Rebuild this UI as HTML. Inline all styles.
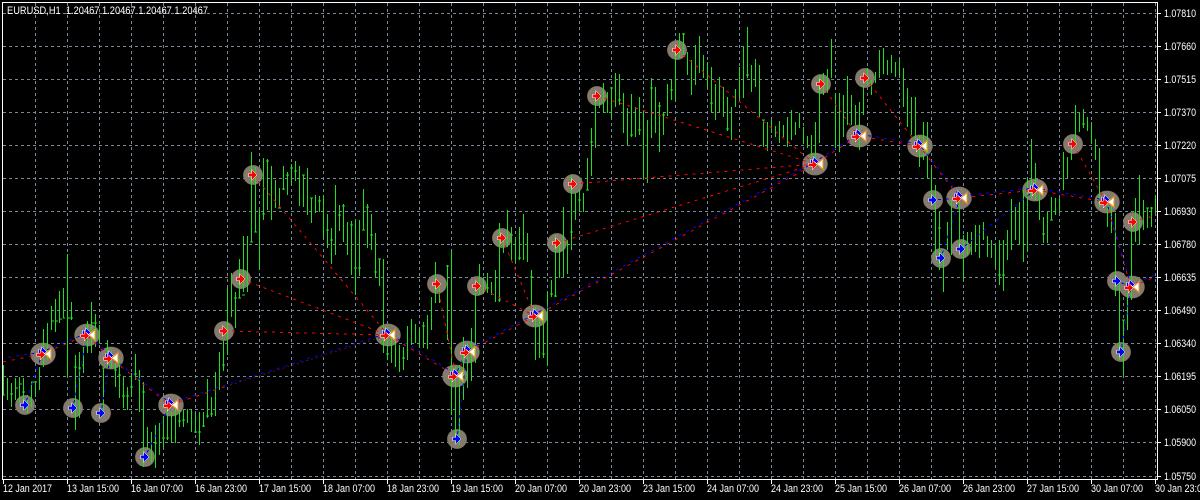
<!DOCTYPE html>
<html><head><meta charset="utf-8"><title>EURUSD,H1</title>
<style>
html,body{margin:0;padding:0;background:#000;width:1200px;height:500px;overflow:hidden}
svg{display:block}
text{font-family:"Liberation Sans",sans-serif;font-size:11px;fill:#fff}
</style></head><body>
<svg width="1200" height="500" viewBox="0 0 1200 500" xmlns="http://www.w3.org/2000/svg">
<defs>
<g id="r"><path d="M-4-1.5h3v-3l4.5 4.5-4.5 4.5v-3h-3z" fill="#f00" stroke="#fff" stroke-width="1.3" paint-order="stroke" shape-rendering="crispEdges"/></g>
<g id="b"><path d="M-4-1.5h3v-3l4.5 4.5-4.5 4.5v-3h-3z" fill="#00f" stroke="#fff" stroke-width="1.3" paint-order="stroke" shape-rendering="crispEdges"/></g>
<g id="d" shape-rendering="crispEdges">
<path d="M1 0l6-5.5v11z" fill="#fff" stroke="#e8952a" stroke-width="1.2"/>
<path d="M-5-4.5h3v-2l4 4-4 4v-2h-3z" fill="#00f" stroke="#fff" stroke-width="1.2" paint-order="stroke"/>
<path d="M-7-.5h3.5v-3l4.5 4-4.5 4.5v-3h-3.5z" fill="#f00" stroke="#fff" stroke-width="1.2" paint-order="stroke"/>
</g>
</defs>
<rect width="1200" height="500" fill="#000"/>

<!-- grid -->
<path fill="none" stroke="#778899" stroke-width="1" stroke-dasharray="3 3" shape-rendering="crispEdges" d="M3 13.5H1157M3 46.5H1157M3 79.5H1157M3 112.5H1157M3 145.5H1157M3 178.5H1157M3 211.5H1157M3 244.5H1157M3 277.5H1157M3 310.5H1157M3 343.5H1157M3 376.5H1157M3 409.5H1157M3 442.5H1157M3 476.5H1157
M35.5 3V479M67.5 3V479M99.5 3V479M131.5 3V479M163.5 3V479M195.5 3V479M227.5 3V479M259.5 3V479M291.5 3V479M323.5 3V479M355.5 3V479M387.5 3V479M419.5 3V479M451.5 3V479M483.5 3V479M515.5 3V479M547.5 3V479M579.5 3V479M611.5 3V479M643.5 3V479M675.5 3V479M707.5 3V479M739.5 3V479M771.5 3V479M803.5 3V479M835.5 3V479M867.5 3V479M899.5 3V479M931.5 3V479M963.5 3V479M995.5 3V479M1027.5 3V479M1059.5 3V479M1091.5 3V479M1123.5 3V479M1155.5 3V479"/>

<!-- marker halos -->
<g fill="#857b6c" stroke="#83796b" stroke-width="0.8">
<circle cx="253" cy="175" r="9.5"/><circle cx="241" cy="279" r="9.5"/><circle cx="224" cy="331" r="9.5"/><circle cx="437" cy="284" r="9.5"/><circle cx="477" cy="286" r="9.5"/><circle cx="502" cy="238" r="9.5"/><circle cx="557" cy="243" r="9.5"/><circle cx="573" cy="184" r="9.5"/><circle cx="597" cy="96" r="9.5"/><circle cx="677" cy="50" r="9.5"/><circle cx="821" cy="84" r="9.5"/><circle cx="865" cy="78" r="9.5"/><circle cx="1073" cy="144" r="9.5"/><circle cx="1133" cy="222" r="9.5"/>
<circle cx="25" cy="405" r="9.5"/><circle cx="73" cy="408" r="9.5"/><circle cx="101" cy="413" r="9.5"/><circle cx="145" cy="457" r="9.5"/><circle cx="457" cy="439" r="9.5"/><circle cx="933" cy="200" r="9.5"/><circle cx="941" cy="258" r="9.5"/><circle cx="961" cy="249" r="9.5"/><circle cx="1121" cy="352" r="9.5"/><circle cx="1117" cy="281" r="9.5"/>
<ellipse cx="43" cy="354" rx="12.3" ry="11"/><ellipse cx="87" cy="335" rx="12.3" ry="11"/><ellipse cx="111" cy="358" rx="12.3" ry="11"/><ellipse cx="171" cy="405" rx="12.3" ry="11"/><ellipse cx="388" cy="335" rx="12.3" ry="11"/><ellipse cx="455" cy="376" rx="12.3" ry="11"/><ellipse cx="467" cy="352" rx="12.3" ry="11"/><ellipse cx="535" cy="316" rx="12.3" ry="11"/><ellipse cx="815" cy="164" rx="12.3" ry="11"/><ellipse cx="859" cy="136" rx="12.3" ry="11"/><ellipse cx="920" cy="146" rx="12.3" ry="11"/><ellipse cx="959" cy="198" rx="12.3" ry="11"/><ellipse cx="1035" cy="190" rx="12.3" ry="11"/><ellipse cx="1107" cy="202" rx="12.3" ry="11"/><ellipse cx="1132" cy="287" rx="12.3" ry="11"/>
</g>

<!-- bars -->
<path fill="none" stroke="#1fe01f" stroke-width="1" shape-rendering="crispEdges" d="M3.5 365V395M3 395h2M7.5 378V400M11.5 383V407M10 394h3M15.5 378V400M15 388h3M19.5 377V403M19 384h3M23.5 378V402M22 392h3M27.5 395V413M31.5 382V407M31 382h3M35.5 382V397M34 382h3M39.5 367V390M43.5 329V367M47.5 323V360M51.5 306V330M51 321h3M55.5 299V332M55 321h3M59.5 291V323M59 319h3M63.5 288V318M63 318h2M67.5 254V377M67 318h3M71.5 302V320M70 318h3M75.5 355V430M74 367h3M79.5 352V418M78 368h3M83.5 347V373M82 365h2M87.5 321V353M91.5 302V353M91 323h3M95.5 314V347M94 323h3M99.5 325V343M103.5 368V413M102 368h3M107.5 340V367M111.5 350V368M115.5 360V387M114 370h3M119.5 359V398M118 375h3M123.5 377V408M122 396h3M127.5 387V410M126 396h3M131.5 373V397M130 387h3M135.5 354V380M134 374h3M139.5 370V412M138 380h3M143.5 382V467M142 392h3M147.5 427V450M151.5 432V463M155.5 425V468M154 443h3M159.5 423V455M163.5 416V447M162 438h3M167.5 410V440M166 438h3M171.5 412V443M175.5 407V443M179.5 410V427M178 421h3M183.5 410V427M182 420h3M187.5 409V423M191.5 409V432M195.5 413V433M194 432h3M199.5 412V445M198 432h3M203.5 412V427M202 426h3M207.5 379V418M206 416h3M211.5 397V417M210 414h3M215.5 372V416M219.5 352V390M223.5 340V371M222 365h3M227.5 288V355M231.5 273V317M235.5 292V328M234 298h3M239.5 259V298M238 298h3M243.5 236V292M242 295h3M247.5 236V292M251.5 152V242M250 242h3M255.5 167V232M254 232h3M259.5 210V270M263.5 158V220M262 214h3M267.5 159V210M266 161h3M271.5 166V220M275.5 180V208M279.5 188V208M278 208h3M283.5 166V190M282 189h3M287.5 172V195M286 175h3M291.5 164V186M290 168h3M295.5 161V181M294 171h3M299.5 166V206M303.5 175V207M302 175h3M307.5 168V215M311.5 198V223M310 198h3M315.5 195V213M319.5 196V212M318 201h3M323.5 195V238M327.5 214V248M326 230h3M331.5 228V264M330 240h3M335.5 185V255M339.5 205V231M338 215h3M343.5 204V242M342 206h3M347.5 222V255M351.5 221V275M350 225h3M355.5 220V295M354 268h3M359.5 220V276M358 268h3M363.5 189V230M362 230h3M367.5 204V248M366 207h3M371.5 214V250M370 235h3M375.5 233V278M374 272h3M379.5 259V286M378 259h3M383.5 259V353M387.5 327V360M386 354h3M391.5 330V363M395.5 337V367M399.5 345V372M403.5 347V370M402 358h3M407.5 326V360M411.5 319V345M415.5 324V343M419.5 328V347M423.5 322V348M422 326h3M427.5 315V349M431.5 297V330M435.5 262V303M439.5 285V303M447.5 265V340M446 266h3M451.5 250V415M455.5 367V440M459.5 365V445M463.5 337V400M467.5 343V388M471.5 328V381M475.5 293V363M479.5 264V295M483.5 277V293M487.5 273V293M486 288h3M491.5 282V295M495.5 270V302M499.5 223V302M498 300h3M503.5 240V253M507.5 210V247M511.5 227V260M510 235h3M515.5 237V263M519.5 227V260M518 258h3M523.5 214V260M527.5 233V262M531.5 270V307M530 277h3M535.5 307V360M539.5 315V358M538 320h3M543.5 310V358M542 354h3M547.5 292V365M551.5 280V297M550 294h3M555.5 235V297M554 296h3M559.5 240V278M563.5 207V278M567.5 240V274M571.5 175V250M570 232h3M575.5 193V220M579.5 190V212M578 200h3M583.5 193V212M587.5 158V190M586 190h3M591.5 128V176M590 142h3M595.5 100V148M599.5 100V108M603.5 83V113M607.5 92V113M611.5 87V118M610 88h3M615.5 73V107M619.5 74V105M618 100h3M623.5 93V133M627.5 108V145M631.5 94V137M630 135h3M635.5 107V137M639.5 97V135M638 130h3M643.5 111V178M647.5 120V183M651.5 78V138M650 88h3M655.5 87V133M659.5 102V152M658 106h3M663.5 112V135M662 115h3M667.5 84V116M671.5 79V100M670 90h3M675.5 50V102M679.5 33V58M683.5 33V55M682 34h3M687.5 52V75M691.5 60V95M695.5 45V85M699.5 36V73M703.5 55V78M707.5 62V88M711.5 67V112M710 103h3M715.5 84V120M719.5 77V112M723.5 87V117M727.5 97V131M726 129h3M731.5 107V140M735.5 89V107M739.5 67V99M743.5 46V98M747.5 27V78M746 75h3M751.5 65V92M755.5 59V87M759.5 65V117M763.5 120V147M762 120h3M767.5 122V151M771.5 120V133M775.5 126V137M779.5 121V143M783.5 125V137M787.5 117V147M791.5 110V140M795.5 122V135M799.5 113V128M803.5 127V143M807.5 136V148M811.5 135V157M815.5 122V160M819.5 75V143M823.5 73V95M827.5 69V93M831.5 39V78M835.5 93V148M839.5 93V152M843.5 95V137M847.5 76V125M851.5 95V125M855.5 105V125M859.5 102V150M863.5 86V115M867.5 68V85M871.5 80V95M875.5 72V83M879.5 50V78M883.5 48V74M887.5 60V75M891.5 55V73M895.5 62V77M899.5 59V77M903.5 68V107M907.5 88V127M911.5 97V135M915.5 97V140M919.5 136V167M923.5 122V160M927.5 122V178M931.5 168V200M935.5 185V257M939.5 212V270M938 228h3M943.5 250V292M947.5 222V250M951.5 200V255M959.5 200V252M963.5 235V281M967.5 232V255M971.5 232V255M975.5 225V252M979.5 225V258M983.5 222V240M987.5 236V257M991.5 240V258M995.5 245V268M999.5 240V285M998 275h3M1003.5 240V291M1002 275h3M1007.5 230V260M1011.5 199V250M1015.5 207V240M1019.5 202V245M1023.5 190V262M1027.5 178V252M1031.5 139V198M1035.5 163V200M1039.5 193V220M1043.5 217V243M1042 234h3M1047.5 212V243M1051.5 197V220M1050 220h3M1055.5 198V215M1059.5 198V213M1063.5 152V190M1067.5 157V178M1071.5 150V160M1075.5 105V145M1079.5 113V132M1083.5 109V128M1082 124h3M1087.5 117V131M1091.5 122V143M1095.5 139V160M1099.5 148V207M1107.5 200V227M1111.5 203V233M1115.5 213V296M1119.5 280V360M1123.5 320V376M1122 320h3M1127.5 293V330M1131.5 227V300M1135.5 198V242M1139.5 175V245M1143.5 200V230M1147.5 208V228M1146 208h3M1151.5 207V227M1150 208h3M1155.5 195V213"/>

<!-- red dashed lines -->
<path fill="none" stroke="#f00" stroke-width="1" stroke-dasharray="3 5" shape-rendering="crispEdges" d="M253 175L388 335M241 279L388 335M224 331L388 335M437 284L456 376M477 286L535 316M502 238L535 316M557 243L815 164M573 184L815 164M597 96L815 164M677 50L815 164M821 84L858 136M865 78L919 146M1073 144L1106 202M1133 222L1157 215"/>
<path fill="none" stroke="#f00" stroke-width="1" stroke-dasharray="3 6" shape-rendering="crispEdges" d="M3 362L42 354L87 335L110 358L170 405L230 385M388 335L456 376L467 352L535 316L815 164L858 136L919 146L960 198L1035 190L1106 202L1131 287L1155 277"/>
<path fill="none" stroke="#5a1010" stroke-width="1" stroke-dasharray="2 3" shape-rendering="crispEdges" d="M230 385L388 335"/>
<!-- blue dashed lines -->
<path fill="none" stroke="#00f" stroke-width="1" stroke-dasharray="3 5" stroke-dashoffset="3" shape-rendering="crispEdges" d="M3 358L42 352L87 333L110 356L170 403L388 333L456 374L467 350L535 314L815 162L858 134L919 144L960 196L1035 188L1106 200L1131 285L1155 275M25 405L42 354M73 408L87 335M101 413L110 358M145 457L170 405M457 439L467 352M933 200L960 198M941 258L960 198M961 249L1035 190M1121 352L1131 287M1117 281L1131 287"/>

<!-- arrows -->
<use href="#r" x="253" y="175"/><use href="#r" x="241" y="279"/><use href="#r" x="224" y="331"/><use href="#r" x="437" y="284"/><use href="#r" x="477" y="286"/><use href="#r" x="502" y="238"/><use href="#r" x="557" y="243"/><use href="#r" x="573" y="184"/><use href="#r" x="597" y="96"/><use href="#r" x="677" y="50"/><use href="#r" x="821" y="84"/><use href="#r" x="865" y="78"/><use href="#r" x="1073" y="144"/><use href="#r" x="1133" y="222"/>
<use href="#b" x="25" y="405"/><use href="#b" x="73" y="408"/><use href="#b" x="101" y="413"/><use href="#b" x="145" y="457"/><use href="#b" x="457" y="439"/><use href="#b" x="933" y="200"/><use href="#b" x="941" y="258"/><use href="#b" x="961" y="249"/><use href="#b" x="1121" y="352"/><use href="#b" x="1117" y="281"/>
<use href="#d" x="44" y="354"/><use href="#d" x="88" y="335"/><use href="#d" x="111" y="358"/><use href="#d" x="171" y="405"/><use href="#d" x="388" y="335"/><use href="#d" x="456" y="376"/><use href="#d" x="468" y="352"/><use href="#d" x="536" y="316"/><use href="#d" x="816" y="164"/><use href="#d" x="859" y="136"/><use href="#d" x="920" y="146"/><use href="#d" x="960" y="198"/><use href="#d" x="1036" y="190"/><use href="#d" x="1107" y="202"/><use href="#d" x="1132" y="287"/>

<!-- frame and ticks -->
<rect x="2.5" y="2.5" width="1155" height="477" fill="none" stroke="#fff" stroke-width="1" shape-rendering="crispEdges"/>
<path fill="none" stroke="#fff" stroke-width="1" shape-rendering="crispEdges" d="M3.5 480V484M67.5 480V484M131.5 480V484M195.5 480V484M259.5 480V484M323.5 480V484M387.5 480V484M451.5 480V484M515.5 480V484M579.5 480V484M643.5 480V484M707.5 480V484M771.5 480V484M835.5 480V484M899.5 480V484M963.5 480V484M1027.5 480V484M1091.5 480V484M1155.5 480V484M1158 13.5H1161M1158 46.5H1161M1158 79.5H1161M1158 112.5H1161M1158 145.5H1161M1158 178.5H1161M1158 211.5H1161M1158 244.5H1161M1158 277.5H1161M1158 310.5H1161M1158 343.5H1161M1158 376.5H1161M1158 409.5H1161M1158 442.5H1161M1158 476.5H1161"/>

<!-- title -->
<text x="7" y="14" textLength="201" lengthAdjust="spacingAndGlyphs">EURUSD,H1&#160;&#160;1.20467 1.20467 1.20467 1.20467</text>

<!-- price axis -->
<text x="1164" y="17" textLength="32" lengthAdjust="spacingAndGlyphs">1.07810</text>
<text x="1164" y="50" textLength="32" lengthAdjust="spacingAndGlyphs">1.07660</text>
<text x="1164" y="83" textLength="32" lengthAdjust="spacingAndGlyphs">1.07515</text>
<text x="1164" y="116" textLength="32" lengthAdjust="spacingAndGlyphs">1.07370</text>
<text x="1164" y="149" textLength="32" lengthAdjust="spacingAndGlyphs">1.07220</text>
<text x="1164" y="182" textLength="32" lengthAdjust="spacingAndGlyphs">1.07075</text>
<text x="1164" y="215" textLength="32" lengthAdjust="spacingAndGlyphs">1.06930</text>
<text x="1164" y="248" textLength="32" lengthAdjust="spacingAndGlyphs">1.06780</text>
<text x="1164" y="281" textLength="32" lengthAdjust="spacingAndGlyphs">1.06635</text>
<text x="1164" y="314" textLength="32" lengthAdjust="spacingAndGlyphs">1.06490</text>
<text x="1164" y="347" textLength="32" lengthAdjust="spacingAndGlyphs">1.06340</text>
<text x="1164" y="380" textLength="32" lengthAdjust="spacingAndGlyphs">1.06195</text>
<text x="1164" y="413" textLength="32" lengthAdjust="spacingAndGlyphs">1.06050</text>
<text x="1164" y="446" textLength="32" lengthAdjust="spacingAndGlyphs">1.05900</text>
<text x="1164" y="480" textLength="32" lengthAdjust="spacingAndGlyphs">1.05750</text>

<!-- time axis -->
<text x="3" y="492" textLength="49" lengthAdjust="spacingAndGlyphs">12 Jan 2017</text>
<text x="67" y="492" textLength="52" lengthAdjust="spacingAndGlyphs">13 Jan 15:00</text>
<text x="131" y="492" textLength="52" lengthAdjust="spacingAndGlyphs">16 Jan 07:00</text>
<text x="195" y="492" textLength="52" lengthAdjust="spacingAndGlyphs">16 Jan 23:00</text>
<text x="259" y="492" textLength="52" lengthAdjust="spacingAndGlyphs">17 Jan 15:00</text>
<text x="323" y="492" textLength="52" lengthAdjust="spacingAndGlyphs">18 Jan 07:00</text>
<text x="387" y="492" textLength="52" lengthAdjust="spacingAndGlyphs">18 Jan 23:00</text>
<text x="451" y="492" textLength="52" lengthAdjust="spacingAndGlyphs">19 Jan 15:00</text>
<text x="515" y="492" textLength="52" lengthAdjust="spacingAndGlyphs">20 Jan 07:00</text>
<text x="579" y="492" textLength="52" lengthAdjust="spacingAndGlyphs">20 Jan 23:00</text>
<text x="643" y="492" textLength="52" lengthAdjust="spacingAndGlyphs">23 Jan 15:00</text>
<text x="707" y="492" textLength="52" lengthAdjust="spacingAndGlyphs">24 Jan 07:00</text>
<text x="771" y="492" textLength="52" lengthAdjust="spacingAndGlyphs">24 Jan 23:00</text>
<text x="835" y="492" textLength="52" lengthAdjust="spacingAndGlyphs">25 Jan 15:00</text>
<text x="899" y="492" textLength="52" lengthAdjust="spacingAndGlyphs">26 Jan 07:00</text>
<text x="963" y="492" textLength="52" lengthAdjust="spacingAndGlyphs">26 Jan 23:00</text>
<text x="1027" y="492" textLength="52" lengthAdjust="spacingAndGlyphs">27 Jan 15:00</text>
<text x="1091" y="492" textLength="52" lengthAdjust="spacingAndGlyphs">30 Jan 07:00</text>
<text x="1155" y="492" textLength="52" lengthAdjust="spacingAndGlyphs">30 Jan 23:00</text>
</svg>
</body></html>
